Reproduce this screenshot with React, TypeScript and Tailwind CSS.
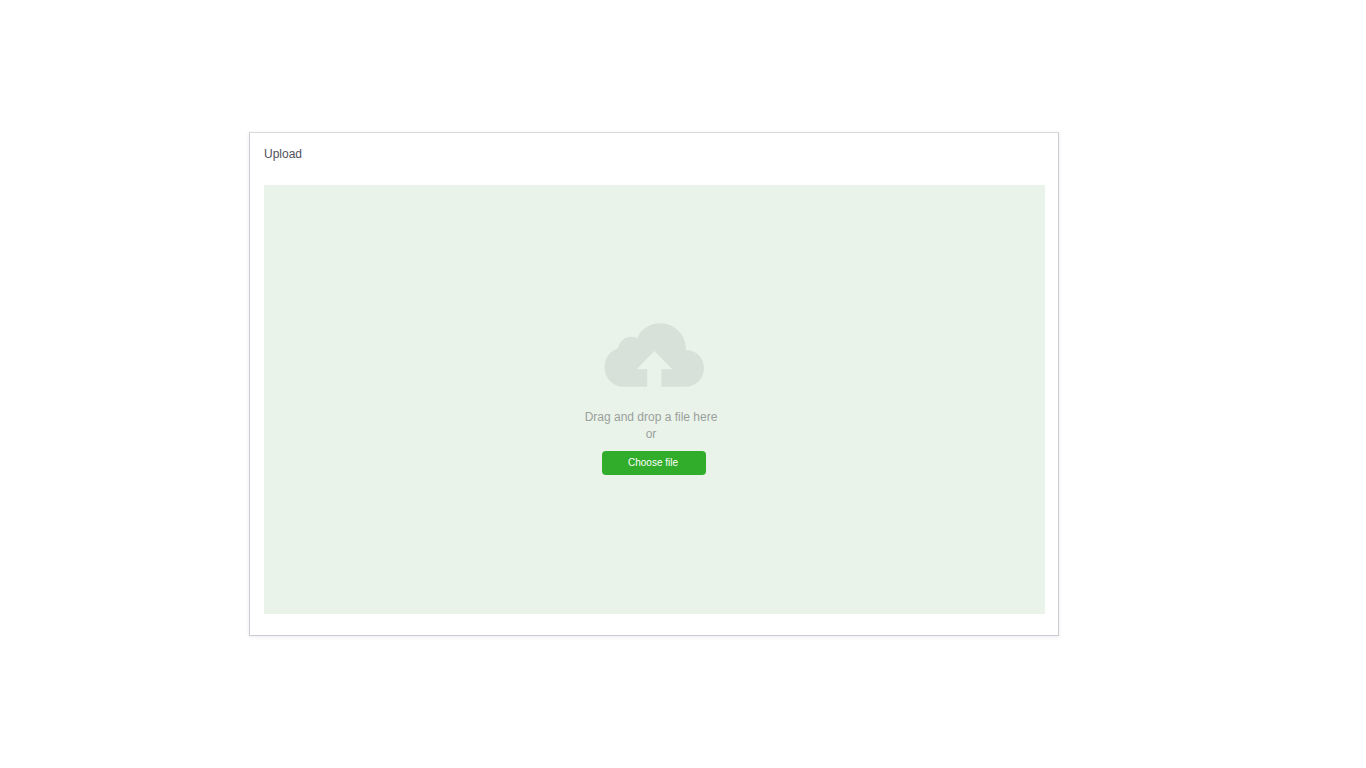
import { useRef } from 'react';

function CloudUploadIcon() {
  return (
    <svg viewBox="0 0 100 64" className="h-16 w-[100px] fill-[#d8e1d9]" aria-hidden="true">
      <path
        fillRule="evenodd"
        d="M20 63.8C8.8 63.8 .5 55 .5 44.2C.5 35 6 27.600 14 25.200C15.600 18.400 20.600 13.800 27 13.800C29.200 13.800 31.200 14.200 33.200 15.200C37.400 5.800 45.800 .3 56.400 .3C70.600 .3 82 12 82 26.200V27C92 27 100 35 100 45.300C100 55.800 92 63.800 81 63.800H57.300V46.200H68.200L50.400 28L32.600 46.200H43.200V63.800Z"
      />
    </svg>
  );
}

export default function App() {
  const fileInput = useRef<HTMLInputElement>(null);

  return (
    <main className="flex min-h-screen items-center bg-white pr-[307px] pl-[249px] font-['Liberation_Sans',Arial,sans-serif]">
      <section className="flex grow flex-col border border-[#c9ccd2] border-t-[#d8dadd] bg-white pt-[11px] pr-[13px] pb-[21px] pl-[14px] shadow-[0_1px_4px_rgba(0,0,0,0.08)]">
        <h1 className="mb-[21px] text-[12px] leading-5 text-[#50505c]">Upload</h1>
        <div className="flex min-h-[429px] flex-col items-center justify-center bg-[#e9f3ea] pr-px pb-px">
          <CloudUploadIcon />
          <p className="mt-[22px] pr-[6px] text-center text-[12px] leading-[17px] text-[#9ba09c]">
            Drag and drop a file here
            <br />
            or
          </p>
          <button
            type="button"
            onClick={() => fileInput.current?.click()}
            className="mt-2 h-6 w-[104px] cursor-pointer rounded-[4px] bg-[#31ad2b] pr-[2px] text-center text-[10px] leading-6 text-white"
          >
            Choose file
          </button>
          <input ref={fileInput} type="file" aria-label="Choose file" className="hidden" />
        </div>
      </section>
    </main>
  );
}
